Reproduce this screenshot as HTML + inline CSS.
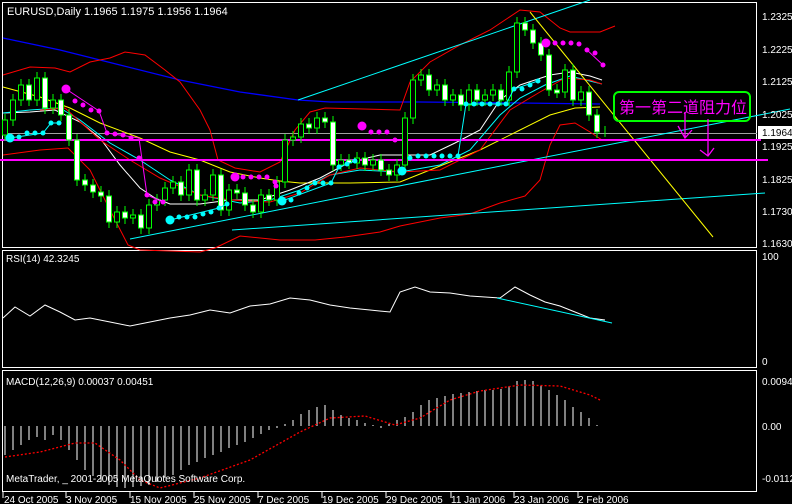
<!DOCTYPE html>
<html><head><meta charset="utf-8"><style>
html,body{margin:0;padding:0;background:#000;width:792px;height:504px;overflow:hidden}
svg{display:block}
text{font-family:"Liberation Sans","Noto Sans CJK SC",sans-serif;fill:#fff;font-size:10px}
</style></head><body>
<svg width="792" height="504" viewBox="0 0 792 504" xmlns="http://www.w3.org/2000/svg">
<rect width="792" height="504" fill="#000"/>
<g fill="none" stroke="#fff" stroke-width="1">
<rect x="2.5" y="2.5" width="754" height="245"/>
<rect x="2.5" y="250.5" width="754" height="117"/>
<rect x="2.5" y="370.5" width="754" height="121"/>
</g>
<line x1="3" y1="133.5" x2="757" y2="133.5" stroke="#a0a0a0"/>
<polyline fill="none" stroke="#0000ff" stroke-width="1.3" points="3,38 60,50 120,65 180,80 240,92 298,100 330,102 420,102 520,103 600,104"/>
<polyline fill="none" stroke="#ff0000" points="3,75 30,67 55,68 70,72 90,62 110,58 125,52 145,55 165,70 180,82 200,110 210,130 218,160 235,168 260,172 280,162 295,130 310,112 325,108 400,110 410,82 430,62 460,45 490,30 520,10 540,12 560,28 570,32 600,32 615,26"/>
<polyline fill="none" stroke="#ff0000" points="3,155 40,150 68,148 90,170 110,210 128,245 140,250 200,252 215,248 240,236 280,240 315,240 345,237 380,232 400,226 440,218 470,214 500,203 525,196 540,180 550,145 560,125 575,123 590,132 602,140"/>
<polyline fill="none" stroke="#ffff00" points="3,87 40,97 70,108 100,123 140,138 170,152 200,160 230,172 260,178 280,181 300,183 350,183 400,182 440,166 480,150 520,130 550,115 575,108 600,107"/>
<polyline fill="none" stroke="#ffffff" points="3,113 30,112 55,110 80,122 100,138 120,165 140,188 155,198 170,204 200,204 230,200 260,200 290,190 320,178 350,162 380,155 400,155 430,155 455,143 480,130 500,100 520,85 550,75 570,72 590,76 602,80"/>
<polyline fill="none" stroke="#00ffff" points="3,113 30,110 60,108 80,120 110,143 140,160 170,180 200,195 240,203 270,200 300,190 330,175 360,170 400,172 440,165 470,150 500,115 520,98 545,85 570,76 602,84"/>
<polyline fill="none" stroke="#ff0000" points="40,110 65,108 100,140 130,160 160,178 200,195 230,200 270,202 300,193 330,175 360,168 400,172 440,170 480,150 510,110 540,92 565,78 590,80 602,84"/>
<line x1="298" y1="100" x2="590" y2="0" stroke="#00ffff"/>
<line x1="130" y1="239" x2="790" y2="109" stroke="#00ffff"/>
<line x1="232" y1="230" x2="765" y2="193" stroke="#00ffff"/>
<line x1="530" y1="12" x2="713" y2="237" stroke="#ffff00"/>
<line x1="0" y1="140" x2="761" y2="140" stroke="#ff00ff" stroke-width="2"/>
<line x1="0" y1="160" x2="768" y2="160" stroke="#ff00ff" stroke-width="2"/>
<path stroke="#00ff00" fill="none" d="M5 114V141M13 94V126M21 79V106M29 79V106M37 72V106M45 72V114M53 94V114M61 94V121M69 109V146M77 134V186M85 174V191M93 179V198M101 186V202M109 190V228M117 206V228M125 206V224M133 209V224M141 209V234M149 199V234M157 194V211M165 182V206M173 176V194M181 176V201M189 164V201M197 164V206M205 189V206M213 169V201M221 169V216M229 184V216M237 184V199M245 187V211M253 199V218M261 189V218M269 189V206M277 176V206M285 134V188M293 131V146M301 118V143M309 118V134M317 112V134M325 112V128M333 116V171M341 154V171M349 154V169M357 152V169M365 152V171M373 154V171M381 154V176M389 164V181M397 159V181M405 112V171M413 74V124M421 69V86M429 69V96M437 79V96M445 79V106M453 89V106M461 89V111M469 84V111M477 84V106M485 89V106M493 84V101M501 84V106M509 66V106M517 17V78M525 17V36M533 24V49M541 37V61M549 49V96M557 84V98M565 64V98M573 64V106M581 86V106M589 86V121M597 109V138M605 126V137"/>
<g fill="#fff" stroke="#00ff00">
<rect x="26.5" y="85" width="5" height="15"/><rect x="42.5" y="78" width="5" height="30"/><rect x="58.5" y="100" width="5" height="15"/><rect x="66.5" y="115" width="5" height="25"/><rect x="74.5" y="140" width="5" height="40"/><rect x="82.5" y="180" width="5" height="5"/><rect x="90.5" y="185" width="5" height="7"/><rect x="98.5" y="192" width="5" height="4"/><rect x="106.5" y="196" width="5" height="26"/><rect x="122.5" y="212" width="5" height="6"/><rect x="138.5" y="215" width="5" height="13"/><rect x="178.5" y="182" width="5" height="13"/><rect x="194.5" y="170" width="5" height="30"/><rect x="218.5" y="175" width="5" height="35"/><rect x="234.5" y="190" width="5" height="3"/><rect x="242.5" y="193" width="5" height="12"/><rect x="250.5" y="205" width="5" height="7"/><rect x="266.5" y="195" width="5" height="5"/><rect x="306.5" y="124" width="5" height="4"/><rect x="322.5" y="118" width="5" height="4"/><rect x="330.5" y="122" width="5" height="43"/><rect x="346.5" y="160" width="5" height="3"/><rect x="362.5" y="158" width="5" height="7"/><rect x="378.5" y="160" width="5" height="10"/><rect x="386.5" y="170" width="5" height="5"/><rect x="426.5" y="75" width="5" height="15"/><rect x="442.5" y="85" width="5" height="15"/><rect x="458.5" y="95" width="5" height="10"/><rect x="474.5" y="90" width="5" height="10"/><rect x="498.5" y="90" width="5" height="10"/><rect x="522.5" y="23" width="5" height="7"/><rect x="530.5" y="30" width="5" height="13"/><rect x="538.5" y="43" width="5" height="12"/><rect x="546.5" y="55" width="5" height="35"/><rect x="554.5" y="90" width="5" height="3"/><rect x="570.5" y="70" width="5" height="30"/><rect x="586.5" y="92" width="5" height="23"/><rect x="594.5" y="115" width="5" height="17"/>
</g>
<g fill="#000" stroke="#00ff00">
<rect x="2.5" y="120" width="5" height="15"/><rect x="10.5" y="100" width="5" height="20"/><rect x="18.5" y="85" width="5" height="15"/><rect x="34.5" y="78" width="5" height="22"/><rect x="50.5" y="100" width="5" height="8"/><rect x="114.5" y="212" width="5" height="10"/><rect x="130.5" y="215" width="5" height="3"/><rect x="146.5" y="205" width="5" height="23"/><rect x="154.5" y="200" width="5" height="5"/><rect x="162.5" y="188" width="5" height="12"/><rect x="170.5" y="182" width="5" height="6"/><rect x="186.5" y="170" width="5" height="25"/><rect x="202.5" y="195" width="5" height="5"/><rect x="210.5" y="175" width="5" height="20"/><rect x="226.5" y="190" width="5" height="20"/><rect x="258.5" y="195" width="5" height="17"/><rect x="274.5" y="182" width="5" height="18"/><rect x="282.5" y="140" width="5" height="42"/><rect x="290.5" y="137" width="5" height="3"/><rect x="298.5" y="124" width="5" height="13"/><rect x="314.5" y="118" width="5" height="10"/><rect x="338.5" y="160" width="5" height="5"/><rect x="354.5" y="158" width="5" height="5"/><rect x="370.5" y="160" width="5" height="5"/><rect x="394.5" y="165" width="5" height="10"/><rect x="402.5" y="118" width="5" height="47"/><rect x="410.5" y="80" width="5" height="38"/><rect x="418.5" y="75" width="5" height="5"/><rect x="434.5" y="85" width="5" height="5"/><rect x="450.5" y="95" width="5" height="5"/><rect x="466.5" y="90" width="5" height="15"/><rect x="482.5" y="95" width="5" height="5"/><rect x="490.5" y="90" width="5" height="5"/><rect x="506.5" y="72" width="5" height="28"/><rect x="514.5" y="23" width="5" height="49"/><rect x="562.5" y="70" width="5" height="22"/><rect x="578.5" y="92" width="5" height="8"/>
</g>
<g fill="#ff00ff">
<circle cx="66" cy="89" r="4.5"/><circle cx="75" cy="101" r="2.5"/><circle cx="83" cy="105" r="2.5"/><circle cx="91" cy="110" r="2.5"/><circle cx="99" cy="111" r="2.5"/><circle cx="107" cy="133" r="2.5"/><circle cx="115" cy="134" r="2.5"/><circle cx="123" cy="135" r="2.5"/><circle cx="131" cy="138" r="2.5"/><circle cx="139" cy="158" r="2.5"/><circle cx="147" cy="195" r="2.5"/><circle cx="155" cy="202" r="2.5"/><circle cx="163" cy="202" r="2.5"/>
<circle cx="235" cy="177" r="4.5"/><circle cx="243" cy="177" r="2.5"/><circle cx="251" cy="177" r="2.5"/><circle cx="259" cy="177" r="2.5"/><circle cx="267" cy="177" r="2.5"/><circle cx="275" cy="182" r="2.5"/><circle cx="276" cy="186" r="2.5"/>
<circle cx="362" cy="126" r="4.5"/><circle cx="371" cy="132" r="2.5"/><circle cx="379" cy="132" r="2.5"/><circle cx="387" cy="132" r="2.5"/><circle cx="395" cy="140" r="2.5"/>
<circle cx="546" cy="43" r="4.5"/><circle cx="555" cy="43" r="2.5"/><circle cx="563" cy="43" r="2.5"/><circle cx="571" cy="43" r="2.5"/><circle cx="579" cy="44" r="2.5"/><circle cx="587" cy="50" r="2.5"/><circle cx="595" cy="53" r="2.5"/><circle cx="603" cy="65" r="2.5"/>
</g>
<polyline fill="none" stroke="#ff00ff" points="66,89 99,111 107,133 139,138 147,195 163,202"/>
<polyline fill="none" stroke="#ff00ff" points="587,50 603,65"/>
<g fill="#00ffff">
<circle cx="10" cy="138" r="4.5"/><circle cx="19" cy="137" r="2.5"/><circle cx="27" cy="133" r="2.5"/><circle cx="35" cy="133" r="2.5"/><circle cx="43" cy="133" r="2.5"/><circle cx="51" cy="123" r="2.5"/><circle cx="59" cy="123" r="2.5"/>
<circle cx="170" cy="220" r="4.5"/><circle cx="179" cy="217" r="2.5"/><circle cx="187" cy="217" r="2.5"/><circle cx="195" cy="217" r="2.5"/><circle cx="203" cy="214" r="2.5"/><circle cx="211" cy="212" r="2.5"/><circle cx="219" cy="208" r="2.5"/><circle cx="227" cy="204" r="2.5"/>
<circle cx="282" cy="201" r="4.5"/><circle cx="291" cy="200" r="2.5"/><circle cx="299" cy="193" r="2.5"/><circle cx="307" cy="188" r="2.5"/><circle cx="315" cy="183" r="2.5"/><circle cx="323" cy="183" r="2.5"/><circle cx="331" cy="183" r="2.5"/><circle cx="339" cy="167" r="2.5"/><circle cx="347" cy="164" r="2.5"/><circle cx="355" cy="161" r="2.5"/>
<circle cx="402" cy="171" r="4.5"/><circle cx="410" cy="158" r="2.5"/><circle cx="418" cy="156" r="2.5"/><circle cx="426" cy="156" r="2.5"/><circle cx="434" cy="156" r="2.5"/><circle cx="442" cy="156" r="2.5"/><circle cx="450" cy="156" r="2.5"/><circle cx="458" cy="156" r="2.5"/>
<circle cx="466" cy="104" r="2.5"/><circle cx="474" cy="104" r="2.5"/><circle cx="482" cy="104" r="2.5"/><circle cx="490" cy="104" r="2.5"/><circle cx="498" cy="104" r="2.5"/><circle cx="506" cy="104" r="2.5"/><circle cx="514" cy="89" r="2.5"/><circle cx="522" cy="89" r="2.5"/><circle cx="530" cy="85" r="2.5"/><circle cx="538" cy="81" r="2.5"/>
</g>
<polyline fill="none" stroke="#00ffff" points="59,123 51,123 43,133 10,138"/>
<polyline fill="none" stroke="#00ffff" points="227,204 219,208 170,220"/>
<polyline fill="none" stroke="#00ffff" points="355,161 339,167 331,183 282,201"/>
<polyline fill="none" stroke="#00ffff" points="458,156 466,104 506,104 514,89 538,81"/>
<text x="7" y="15" style="font-size:11px">EURUSD,Daily  1.1965 1.1975 1.1956 1.1964</text>
<rect x="614" y="92" width="136" height="29" rx="5" fill="none" stroke="#00ff00" stroke-width="2"/>
<text x="619" y="113" style="fill:#ff00ff;font-size:16px">第一第二道阻力位</text>
<path d="M685 112V138M678 126L685 138L692 130M708 119V155M700 150L708 156L714 148" stroke="#ff00ff" fill="none" stroke-width="1.3"/>
<g>
<text x="762" y="20">1.2325</text><text x="762" y="53">1.2225</text><text x="762" y="85">1.2125</text><text x="762" y="118">1.2025</text><text x="762" y="150">1.1925</text><text x="762" y="183">1.1825</text><text x="762" y="215">1.1730</text><text x="762" y="247">1.1630</text>
</g>
<rect x="758" y="126" width="34" height="13" fill="#fff"/>
<text x="762" y="136" style="fill:#000">1.1964</text>
<text x="6" y="262">RSI(14) 42.3245</text>
<text x="762" y="260">100</text><text x="762" y="365">0</text>
<polyline fill="none" stroke="#fff" points="3,318 15,307 30,316 45,305 60,312 75,320 90,318 110,322 130,326 150,322 170,318 190,315 210,310 230,313 250,306 270,304 290,298 310,300 330,305 350,308 370,310 390,312 400,292 415,287 430,292 450,293 470,296 500,298 515,287 530,295 545,302 560,306 575,312 590,318 605,320"/>
<line x1="497" y1="298" x2="612" y2="323" stroke="#00ffff"/>
<text x="6" y="385">MACD(12,26,9) 0.00037 0.00451</text>
<text x="762" y="385">0.00946</text><text x="762" y="430">0.00</text><text x="762" y="482">-0.0112</text>
<path stroke="#fff" fill="none" d="M5 426V455M13 426V450M21 426V445M29 426V440M37 426V437M45 426V440M53 426V435M61 426V440M69 426V450M77 426V460M85 426V470M93 426V476M101 426V482M109 426V485M117 426V487M125 426V488M133 426V487M141 426V486M149 426V485M157 426V482M165 426V478M173 426V475M181 426V470M189 426V465M197 426V462M205 426V458M213 426V455M221 426V452M229 426V448M237 426V445M245 426V442M253 426V438M261 426V434M269 426V430M277 426V428M285 426V424V426M293 426V420M301 426V414M309 426V410M317 426V407M325 426V405M333 426V410M341 426V415M349 426V418M357 426V420M365 426V423M373 426V425M381 426V428M389 426V424M397 426V420M405 426V417M413 426V412M421 426V405M429 426V400M437 426V398M445 426V396M453 426V394M461 426V393M469 426V392M477 426V391M485 426V390M493 426V390M501 426V389M509 426V386M517 426V381M525 426V380M533 426V381M541 426V385M549 426V390M557 426V395M565 426V400M573 426V407M581 426V412M589 426V418M597 426V425"/>
<polyline fill="none" stroke="#ff0000" stroke-dasharray="2,2" stroke-width="1.3" points="5,457 40,452 75,443 95,443 120,460 140,480 160,488 200,478 250,460 300,432 330,418 365,416 395,425 420,418 450,400 480,391 520,385 560,386 590,395 600,400"/>
<text x="6" y="482">MetaTrader, _ 2001-2005 MetaQuotes Software Corp.</text>
<path stroke="#fff" d="M3 492V498M66 492V498M130 492V498M194 492V498M258 492V498M322 492V498M386 492V498M451 492V498M514 492V498M578 492V498"/>
<g>
<text x="4" y="503">24 Oct 2005</text><text x="66" y="503">3 Nov 2005</text><text x="130" y="503">15 Nov 2005</text><text x="194" y="503">25 Nov 2005</text><text x="258" y="503">7 Dec 2005</text><text x="322" y="503">19 Dec 2005</text><text x="386" y="503">29 Dec 2005</text><text x="451" y="503">11 Jan 2006</text><text x="514" y="503">23 Jan 2006</text><text x="578" y="503">2 Feb 2006</text>
</g>
</svg>
</body></html>
